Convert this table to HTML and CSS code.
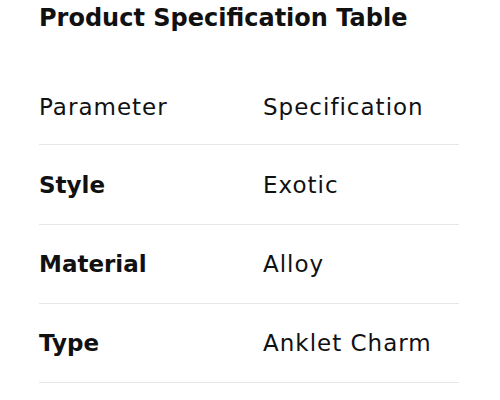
FILE: index.html
```html
<!DOCTYPE html>
<html>
<head>
<meta charset="utf-8">
<link rel="stylesheet" href="styles.css">
</head>
<body>
<div class="page">
  <h1 class="title">Product Specification Table</h1>
  <table class="spec">
    <thead>
      <tr><th class="head">Parameter</th><th class="head">Specification</th></tr>
    </thead>
    <tbody>
      <tr class="first"><td class="key">Style</td><td class="val">Exotic</td></tr>
      <tr><td class="key">Material</td><td class="val">Alloy</td></tr>
      <tr><td class="key">Type</td><td class="val">Anklet Charm</td></tr>
    </tbody>
  </table>
</div>
</body>
</html>
```
FILE: styles.css
```css
html, body { margin: 0; padding: 0; background: #fff; }
body { font-family: "DejaVu Sans", sans-serif; color: #111; }
.page { padding: 0 41px 0 39px; }
.title { margin: 0; font-size: 24px; font-weight: 700; line-height: 36px; }
.spec { width: 420px; border-collapse: collapse; margin-top: 30px; }
.spec th, .spec td { text-align: left; padding: 0; height: 78px; border-bottom: 1.5px solid #e6e6e6; font-size: 23px; line-height: 30px; vertical-align: middle; }
.spec th.head { padding-top: 3px; height: 75px; }
.first td { height: 79px; }
.head { font-weight: 400; letter-spacing: 1px; }
.spec th:first-child, .spec td:first-child { width: 224px; }
.key { font-weight: 700; }
.val { font-weight: 400; letter-spacing: 1px; }
```
